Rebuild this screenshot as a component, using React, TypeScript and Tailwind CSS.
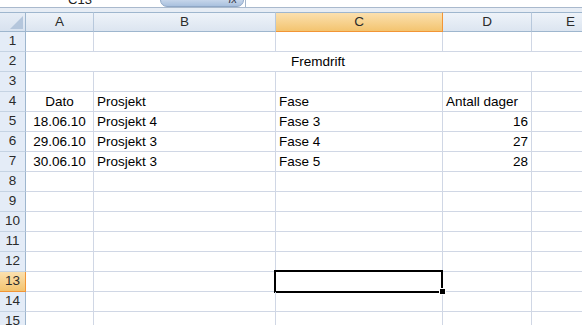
import React from "react";

const cols = ["A", "B", "C", "D", "E"];
const rowCount = 15;

type Cell = { text: string; align?: "left" | "center" | "right" };

const data: Record<number, Cell[]> = {
  4: [{ text: "Dato", align: "center" }, { text: "Prosjekt" }, { text: "Fase" }, { text: "Antall dager" }, { text: "" }],
  5: [{ text: "18.06.10", align: "center" }, { text: "Prosjekt 4" }, { text: "Fase 3" }, { text: "16", align: "right" }, { text: "" }],
  6: [{ text: "29.06.10", align: "center" }, { text: "Prosjekt 3" }, { text: "Fase 4" }, { text: "27", align: "right" }, { text: "" }],
  7: [{ text: "30.06.10", align: "center" }, { text: "Prosjekt 3" }, { text: "Fase 5" }, { text: "28", align: "right" }, { text: "" }],
};

const alignClass = {
  left: "justify-start pl-[3px]",
  center: "justify-center",
  right: "justify-end pr-[3px]",
};

export default function App() {
  const rows = Array.from({ length: rowCount }, (_, i) => i + 1);

  return (
    <div
      className="w-[582px] h-[325px] overflow-hidden bg-white text-black"
      style={{ fontFamily: "'Liberation Sans', Arial, sans-serif" }}
    >
      {/* formula bar, cut off at top */}
      <div className="flex h-[7px] overflow-hidden bg-white">
        <div className="w-[158px] flex justify-center">
          <span className="text-[13px] leading-none -mt-[7px] ml-[2px] text-[#222]">C13</span>
        </div>
        <div className="w-[84px] h-[14px] -mt-[7px] ml-[2px] rounded-[7px] border border-[#8fa7c6] bg-gradient-to-b from-[#e3ebf6] to-[#a9c0de] flex justify-end pr-[6px] items-end">
          <span className="text-[11px] leading-none italic text-[#334] mb-[1px]">fx</span>
        </div>
        <div className="flex-1 border-l border-[#a3b5cb] ml-[1px]" />
      </div>
      <div className="h-[1px] bg-[#a9b9cd]" />
      <div className="h-[4px] bg-[#e7edf5]" />

      {/* sheet */}
      <div className="grid grid-cols-[26px_68px_182px_167px_89px_78px] w-[610px] text-[13.5px]">
        {/* header row */}
        <div className="h-[20px] relative bg-gradient-to-b from-[#e6edf6] to-[#d8e2ef] border-r border-b border-[#9eb6ce] border-t border-t-[#9eb6ce]">
          <div className="absolute right-[2px] bottom-[2px] w-0 h-0 border-l-[13px] border-l-transparent border-b-[13px] border-b-[#b4c6dc]" />
        </div>
        {cols.map((c) => (
          <div
            key={c}
            className={
              c === "C"
                ? "h-[20px] flex items-center justify-center border-r border-b border-t border-[#f29536] border-t-[#9eb6ce] bg-gradient-to-b from-[#fbe0ae] to-[#f3c46f] text-[#2b2b2b]"
                : "h-[20px] flex items-center justify-center border-r border-b border-t border-[#9eb6ce] border-r-[#b7c8dc] bg-gradient-to-b from-[#eef3f9] to-[#dce5f0] text-[#2b2b2b]"
            }
          >
            {c}
          </div>
        ))}

        {rows.map((r) => {
          const rowHead = (
            <div
              key={`h${r}`}
              className={
                r === 13
                  ? "h-[20px] flex items-center justify-center border-r border-b border-[#f29536] bg-gradient-to-b from-[#fbe0ae] to-[#f3c46f] text-[#2b2b2b]"
                  : "h-[20px] flex items-center justify-center border-r border-b border-[#9eb6ce] border-b-[#c5d3e3] bg-[#e4ecf7] text-[#2b2b2b]"
              }
            >
              {r}
            </div>
          );

          if (r === 2) {
            return (
              <React.Fragment key={r}>
                {rowHead}
                <div className="col-span-5 h-[20px] flex items-end justify-center pb-[1px] border-b border-[#d0d7e5] leading-[17px]">
                  Fremdrift
                </div>
              </React.Fragment>
            );
          }

          return (
            <React.Fragment key={r}>
              {rowHead}
              {cols.map((c, ci) => {
                const cell = data[r]?.[ci];
                const selected = r === 13 && c === "C";
                return (
                  <div
                    key={c}
                    className={`relative h-[20px] flex items-end pb-[1px] leading-[17px] whitespace-nowrap border-r border-b border-[#d0d7e5] ${alignClass[cell?.align ?? "left"]}`}
                  >
                    {cell?.text}
                    {selected && (
                      <>
                        <div className="absolute -left-[2px] -top-[2px] w-[169px] h-[23px] border-2 border-black" />
                        <div className="absolute z-10 -right-[4px] -bottom-[4px] w-[7px] h-[7px] bg-black border border-white" />
                      </>
                    )}
                  </div>
                );
              })}
            </React.Fragment>
          );
        })}
      </div>
    </div>
  );
}
